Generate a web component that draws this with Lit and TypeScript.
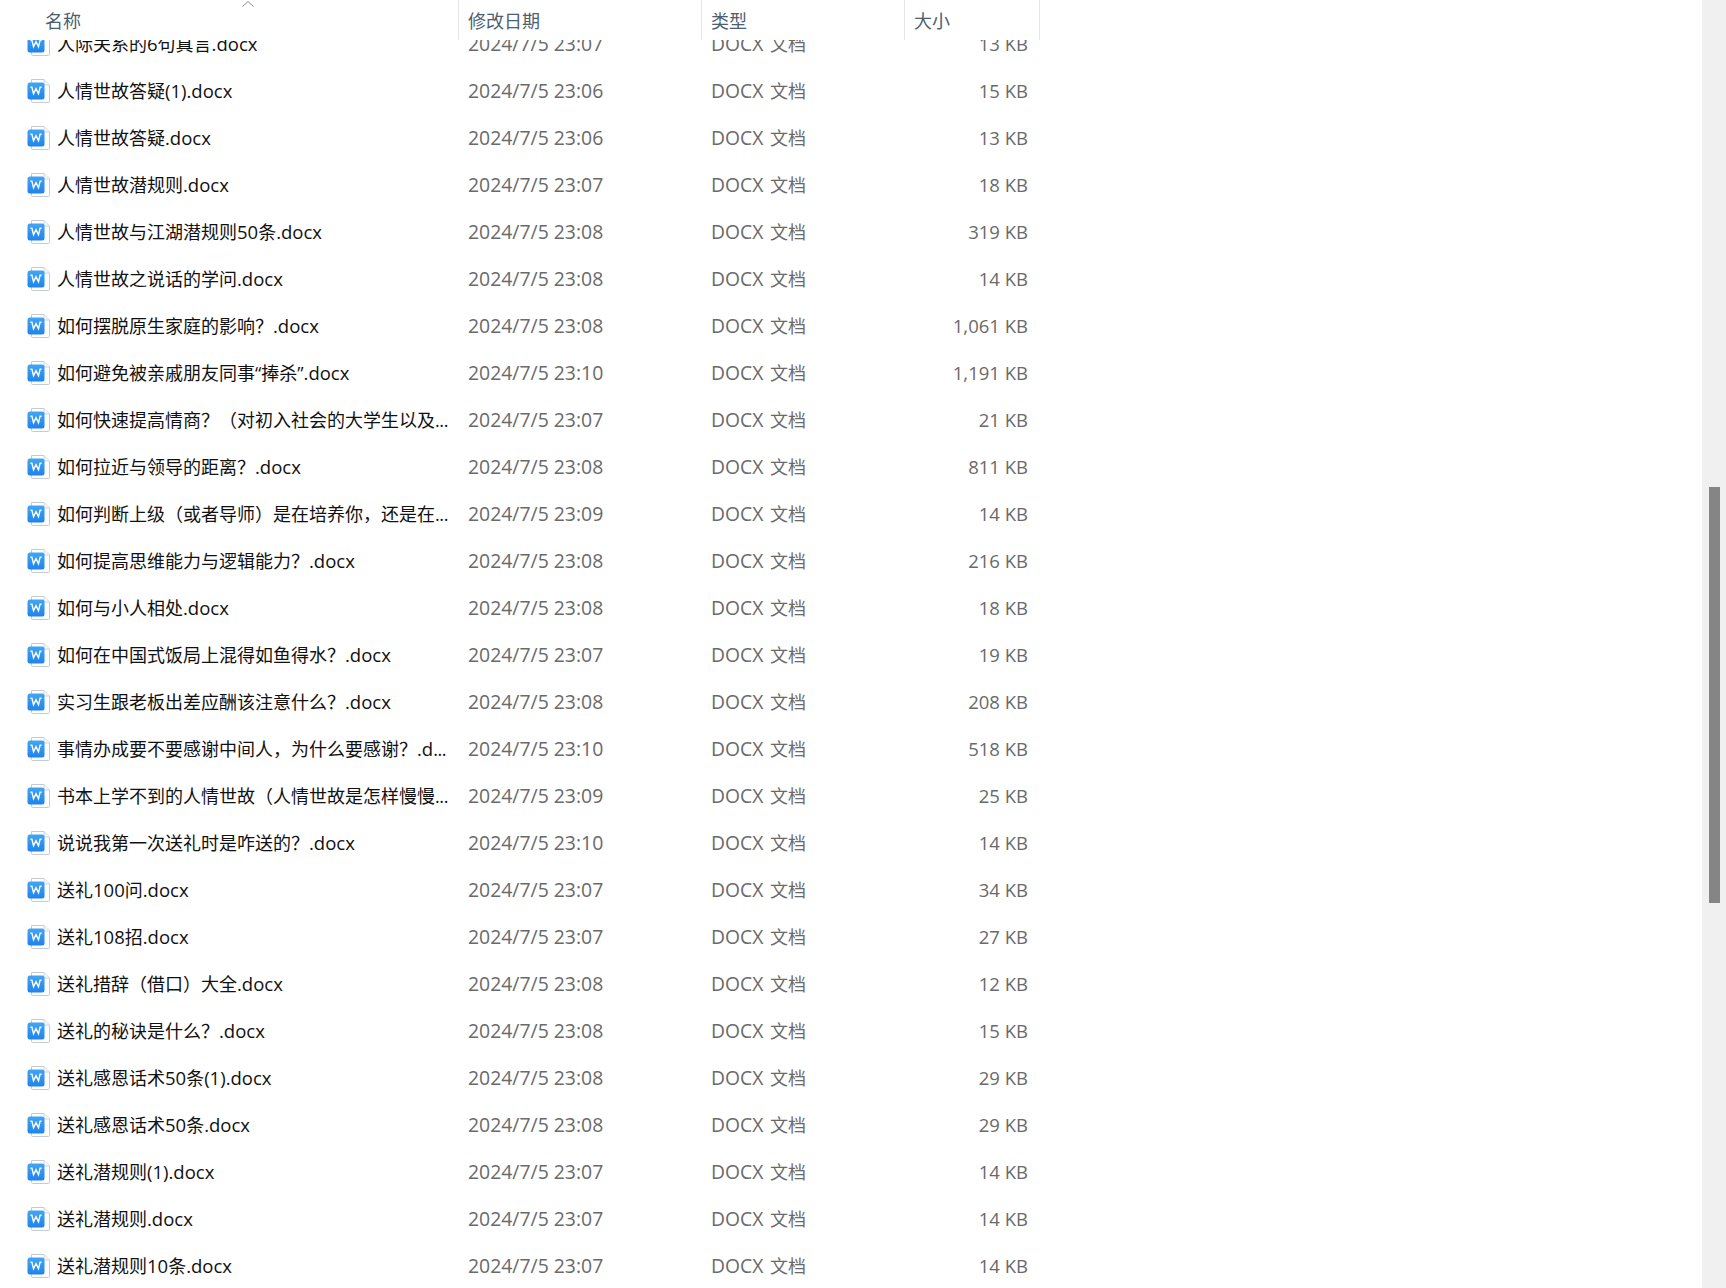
import { LitElement, html, css, svg } from "lit";
import { customElement } from "lit/decorators.js";

type Row = [string, string, string];
const rows: Row[] = [
  ["人际关系的6句真言.docx", "23:07", "13"],
  ["人情世故答疑(1).docx", "23:06", "15"],
  ["人情世故答疑.docx", "23:06", "13"],
  ["人情世故潜规则.docx", "23:07", "18"],
  ["人情世故与江湖潜规则50条.docx", "23:08", "319"],
  ["人情世故之说话的学问.docx", "23:08", "14"],
  ["如何摆脱原生家庭的影响？.docx", "23:08", "1,061"],
  ["如何避免被亲戚朋友同事“捧杀”.docx", "23:10", "1,191"],
  ["如何快速提高情商？（对初入社会的大学生以及...", "23:07", "21"],
  ["如何拉近与领导的距离？.docx", "23:08", "811"],
  ["如何判断上级（或者导师）是在培养你，还是在...", "23:09", "14"],
  ["如何提高思维能力与逻辑能力？.docx", "23:08", "216"],
  ["如何与小人相处.docx", "23:08", "18"],
  ["如何在中国式饭局上混得如鱼得水？.docx", "23:07", "19"],
  ["实习生跟老板出差应酬该注意什么？.docx", "23:08", "208"],
  ["事情办成要不要感谢中间人，为什么要感谢？.d...", "23:10", "518"],
  ["书本上学不到的人情世故（人情世故是怎样慢慢...", "23:09", "25"],
  ["说说我第一次送礼时是咋送的？.docx", "23:10", "14"],
  ["送礼100问.docx", "23:07", "34"],
  ["送礼108招.docx", "23:07", "27"],
  ["送礼措辞（借口）大全.docx", "23:08", "12"],
  ["送礼的秘诀是什么？.docx", "23:08", "15"],
  ["送礼感恩话术50条(1).docx", "23:08", "29"],
  ["送礼感恩话术50条.docx", "23:08", "29"],
  ["送礼潜规则(1).docx", "23:07", "14"],
  ["送礼潜规则.docx", "23:07", "14"],
  ["送礼潜规则10条.docx", "23:07", "14"],
];

const icon = svg`<svg class="icon" viewBox="0 0 24 27" width="24" height="27" aria-hidden="true">
  <defs><linearGradient id="wg" x1="0" y1="0" x2="0" y2="1"><stop offset="0" stop-color="#41a5f5"/><stop offset="1" stop-color="#2083ec"/></linearGradient></defs>
  <path d="M4.5 1.5H17L22.5 7V23.4a1.1 1.1 0 0 1-1.1 1.1H5.6a1.1 1.1 0 0 1-1.1-1.1Z" fill="#fff" stroke="#c6cad2" stroke-width="1"/>
  <path d="M17 1.5V7H22.5" fill="#f3f5f8" stroke="#d2d5da" stroke-width="1"/>
  <rect x="0.5" y="4.5" width="17" height="17" rx="2.5" fill="url(#wg)"/>
  <path d="M3.4 9.2H4.9L6.5 15.8 9 10.6 11.5 15.8 13.1 9.2H14.6" fill="none" stroke="#fff" stroke-width="1.4"/>
</svg>`;

/** Wraps the Latin runs of a file name so they sit slightly larger than the CJK text. */
function nameParts(name: string) {
  const ell = name.endsWith("...");
  const base = ell ? name.slice(0, -3) : name;
  const parts = base.split(/([\x20-\x7e]+)/).filter(Boolean);
  return html`${parts.map((p) =>
    /^[\x20-\x7e]+$/.test(p) ? html`<span class="lat">${p}</span>` : p
  )}${ell ? html`<span class="ell">...</span>` : ""}`;
}

@customElement("app-root")
export class AppRoot extends LitElement {
  static styles = css`
    :host {
      display: block;
      width: 1726px;
      height: 1288px;
      overflow: hidden;
      background: #fff;
      font-family: "Open Sans", "Noto Sans CJK SC", sans-serif;
      font-size: 18px;
    }
    .frame {
      display: flex;
      height: 1288px;
    }
    .pane {
      flex: 1;
      min-width: 0;
      display: flex;
      flex-direction: column;
    }
    .cols {
      display: grid;
      grid-template-columns: 459px 243px 203px 135px;
      width: 1040px;
    }
    .head {
      height: 40px;
      flex: none;
      position: relative;
      z-index: 1;
      background: #fff;
    }
    .hc {
      border-right: 1px solid #e5e5e5;
      padding: 2px 0 0 9px;
      display: flex;
      align-items: center;
      color: #4c6070;
      font-size: 18px;
      line-height: 38px;
    }
    .hc.first {
      padding-left: 45px;
      position: relative;
    }
    .sort {
      position: absolute;
      left: 241px;
      top: 0;
    }
    .list {
      flex: 1;
      min-height: 0;
      overflow: hidden;
    }
    .inner {
      margin-top: -19px;
    }
    .row {
      height: 47px;
      align-items: center;
      color: #6a6a6a;
    }
    .cell {
      padding-left: 9px;
      white-space: nowrap;
      line-height: 47px;
    }
    .name {
      display: flex;
      align-items: center;
      padding-left: 27px;
      color: #111;
      gap: 6px;
    }
    .lat {
      font-size: 18.5px;
      line-height: 0;
    }
    .ell {
      letter-spacing: -0.4px;
    }
    .icon {
      flex: none;
    }
    .date {
      font-size: 19.4px;
      align-self: start;
      line-height: 45px;
    }
    .latin {
      font-size: 19.3px;
      line-height: 0;
      margin-right: 2px;
    }
    .size {
      text-align: right;
      padding: 0 12px 0 0;
      font-size: 18.5px;
      align-self: start;
      line-height: 45px;
    }
    .bar {
      width: 24px;
      flex: none;
      background: #f0f0f0;
      position: relative;
    }
    .thumb {
      position: absolute;
      left: 7px;
      top: 487px;
      width: 11px;
      height: 416px;
      background: #858585;
    }
  `;

  render() {
    return html`<div class="frame" lang="zh-CN">
      <div class="pane">
        <div class="head cols">
          <div class="hc first">名称
            <svg class="sort" width="14" height="8" viewBox="0 0 14 8"><path d="M1.5 6.5 7 1.5 12.5 6.5" fill="none" stroke="#8a8a8a" stroke-width="1"/></svg>
          </div>
          <div class="hc">修改日期</div>
          <div class="hc">类型</div>
          <div class="hc">大小</div>
        </div>
        <div class="list">
          <div class="inner">
            ${rows.map(
              ([n, t, s]) => html`<div class="row cols">
                <div class="cell name">${icon}<span>${nameParts(n)}</span></div>
                <div class="cell date">2024/7/5 ${t}</div>
                <div class="cell"><span class="latin">DOCX</span> 文档</div>
                <div class="cell size">${s} KB</div>
              </div>`
            )}
          </div>
        </div>
      </div>
      <div class="bar"><div class="thumb"></div></div>
    </div>`;
  }
}
